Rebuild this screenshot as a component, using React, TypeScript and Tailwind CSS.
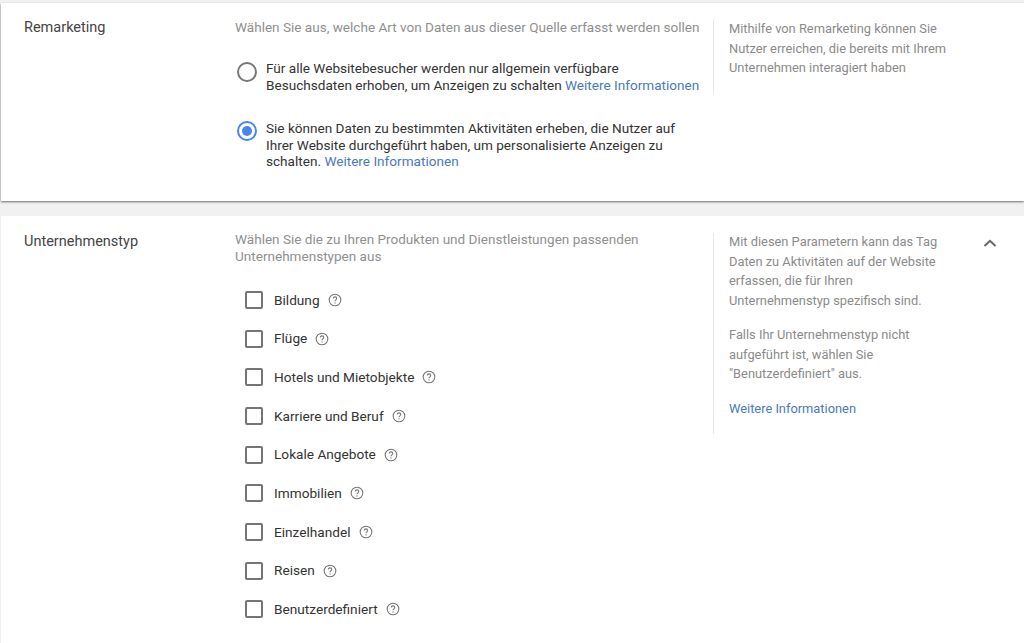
const categories = ['Bildung', 'Flüge', 'Hotels und Mietobjekte', 'Karriere und Beruf', 'Lokale Angebote', 'Immobilien', 'Einzelhandel', 'Reisen', 'Benutzerdefiniert']

function HelpIcon() {
    return (
        <svg width="14" height="14" viewBox="0 0 24 24" fill="none" className="ml-2 shrink-0 text-[#757575]">
            <circle cx="12" cy="12" r="10" stroke="currentColor" strokeWidth="1.8" />
            <path d="M9 9.6a3 3 0 0 1 6 0c0 2-3 2.2-3 4.4" stroke="currentColor" strokeWidth="1.8" />
            <circle cx="12" cy="17" r="1.2" fill="currentColor" />
        </svg>
    )
}

function Link({ children }: { children: string }) {
    return <span className="text-[#4a7ab8]">{children}</span>
}

export default function App() {
    return (
        <div className="h-[643px] overflow-hidden bg-[#f1f1f1] pt-[3px] font-['Roboto',sans-serif] text-[13.55px] text-[#333]">
            <section className="ml-px flex h-[198px] bg-white shadow-[0_1px_2px_rgba(0,0,0,0.55)]">
                <h2 className="w-[234px] shrink-0 pl-[23px] pt-[15px] text-[14.5px] leading-[20px] text-[#444]">Remarketing</h2>
                <div className="w-[478px] shrink-0">
                    <p className="pt-[14px] leading-[20px] text-[#8f8f8f]">Wählen Sie aus, welche Art von Daten aus dieser Quelle erfasst werden sollen</p>
                    <div className="mt-[23px] flex">
                        <span className="ml-[2px] mt-[2px] h-5 w-5 shrink-0 rounded-full border-2 border-[#777]" />
                        <p className="ml-[9px] w-[440px] text-[13.58px] leading-[17px]">
                            Für alle Websitebesucher werden nur allgemein verfügbare<br />Besuchsdaten erhoben, um Anzeigen zu schalten <Link>Weitere Informationen</Link>
                        </p>
                    </div>
                    <div className="mt-[26px] flex">
                        <span className="ml-[2px] mt-[1px] flex h-5 w-5 shrink-0 items-center justify-center rounded-full border-2 border-[#4a86e8]">
                            <span className="h-[10px] w-[10px] rounded-full bg-[#4a86e8]" />
                        </span>
                        <p className="ml-[9px] w-[425px] text-[13.58px] leading-[16.5px]">
                            Sie können Daten zu bestimmten Aktivitäten erheben, die Nutzer auf Ihrer Website durchgeführt haben, um personalisierte Anzeigen zu schalten. <Link>Weitere Informationen</Link>
                        </p>
                    </div>
                </div>
                <div className="mt-[16px] h-[75px] border-l border-[#e8e8e8] pl-[15px] text-[12.85px] leading-[19.5px] text-[#8a8a8a]">
                    <p className="w-[230px]">Mithilfe von Remarketing können Sie Nutzer erreichen, die bereits mit Ihrem Unternehmen interagiert haben</p>
                </div>
            </section>

            <section className="ml-px mt-[15px] flex h-[427px] bg-white">
                <h2 className="w-[234px] shrink-0 pl-[23px] pt-[16px] text-[14.5px] leading-[20px] text-[#444]">Unternehmenstyp</h2>
                <div className="w-[478px] shrink-0">
                    <p className="w-[440px] pt-[15px] leading-[17px] text-[#8f8f8f]">Wählen Sie die zu Ihren Produkten und Dienstleistungen passenden Unternehmenstypen aus</p>
                    <ul className="ml-[10px] mt-[15.5px]">
                        {categories.map((c) => (
                            <li key={c} className="flex h-[38.7px] items-center">
                                <span className="h-[18px] w-[18px] shrink-0 rounded-[2px] border-2 border-[#757575]" />
                                <span className="ml-[11px] text-[13.65px]">{c}</span>
                                <HelpIcon />
                            </li>
                        ))}
                    </ul>
                </div>
                <div className="mt-[17px] h-[201px] w-[245px] border-l border-[#e8e8e8] pl-[15px] text-[12.85px] leading-[19.5px] text-[#8a8a8a]">
                    <p className="-mt-px w-[225px]">Mit diesen Parametern kann das Tag Daten zu Aktivitäten auf der Website erfassen, die für Ihren Unternehmenstyp spezifisch sind.</p>
                    <p className="mt-[15px] w-[225px]">Falls Ihr Unternehmenstyp nicht aufgeführt ist, wählen Sie "Benutzerdefiniert" aus.</p>
                    <p className="mt-[15px]"><Link>Weitere Informationen</Link></p>
                </div>
                <svg width="16" height="10" viewBox="0 0 16 10" fill="none" className="ml-[24px] mt-[22px] text-[#666]">
                    <path d="M2.5 8 8 2.8 13.5 8" stroke="currentColor" strokeWidth="2" />
                </svg>
            </section>
        </div>
    )
}
